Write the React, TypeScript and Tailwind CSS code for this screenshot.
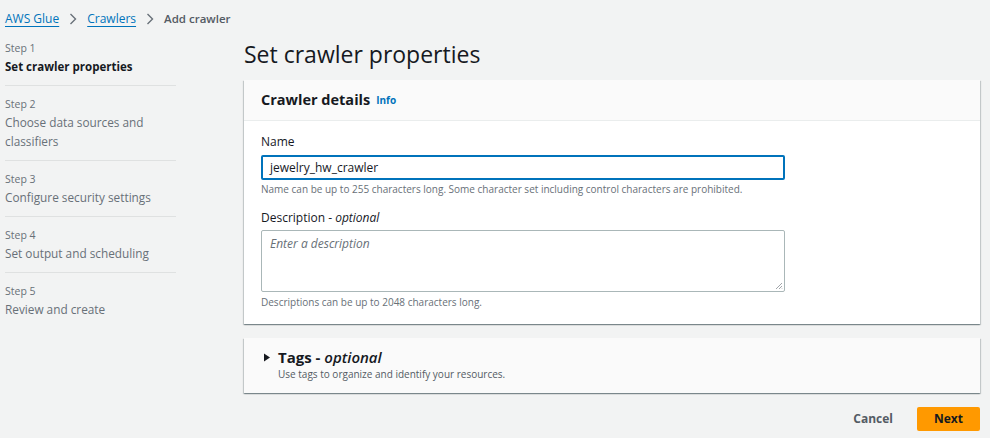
import React from 'react';

const steps = [
  { n: 1, title: 'Set crawler properties', active: true },
  { n: 2, title: 'Choose data sources and classifiers' },
  { n: 3, title: 'Configure security settings' },
  { n: 4, title: 'Set output and scheduling' },
  { n: 5, title: 'Review and create' },
];

const cardShadow =
  'shadow-[0_1px_1px_0_rgba(0,28,36,0.3),1px_1px_1px_0_rgba(0,28,36,0.15),-1px_1px_1px_0_rgba(0,28,36,0.15)]';

const Chevron = () => (
  <svg className="mx-[10px]" width="8" height="12" viewBox="0 0 8 12">
    <path d="M1.5 1 L6.5 6 L1.5 11" fill="none" stroke="#687078" strokeWidth="1.4" />
  </svg>
);

export default function App() {
  return (
    <div className="w-[990px] h-[438px] overflow-hidden bg-[#f2f3f3] text-[#16191f] font-['Open_Sans',sans-serif]">
      {/* Breadcrumbs */}
      <div className="flex items-center h-[36px] pl-[5px] pt-[1px] text-[12px] font-medium">
        <span className="text-[#0073bb] underline underline-offset-[3px] decoration-[#0073bb]">AWS Glue</span>
        <Chevron />
        <span className="text-[#0073bb] underline underline-offset-[3px] decoration-[#0073bb]">Crawlers</span>
        <Chevron />
        <span className="text-[#545b64] font-semibold text-[11.5px]">Add crawler</span>
      </div>

      <div className="flex">
        {/* Steps nav */}
        <div className="w-[171px] ml-[5px] shrink-0">
          {steps.map((s, i) => (
            <div
              key={s.n}
              className={`${i > 0 ? 'border-t border-[#dfe1e1] pt-[9px]' : 'pt-[3px]'} ${i < steps.length - 1 ? 'pb-[9px]' : ''}`}
            >
              <div className="text-[10.5px] leading-[18px] text-[#687078]">Step {s.n}</div>
              <div
                className={`leading-[19px] ${s.active ? 'text-[11.5px] font-bold text-[#16191f]' : 'text-[11.8px] text-[#687078]'}`}
              >
                {s.n === 2 ? (
                  <>Choose data sources and<br />classifiers</>
                ) : s.title}
              </div>
            </div>
          ))}
        </div>

        {/* Main */}
        <div className="ml-[68px] w-[736px]">
          <h1 className="text-[23px] leading-[36px] font-normal text-[#16191f] mb-[8px]">Set crawler properties</h1>

          {/* Crawler details card */}
          <div className={`bg-white ${cardShadow}`}>
            <div className="h-[41px] bg-[#fafafa] border-b border-[#eaeded] flex items-center px-[17px]">
              <span className="text-[14.5px] font-bold">Crawler details</span>
              <span className="ml-[6px] text-[10px] font-bold text-[#0073bb]">Info</span>
            </div>
            <div className="px-[17px] pt-[12px] pb-[14px]">
              <div className="text-[12px] leading-[18px] mb-[4px]">Name</div>
              <div className="w-[524px] h-[25px] border-2 border-[#0073bb] rounded-[2px] flex items-center px-[7px] text-[12px]">
                jewelry_hw_crawler
              </div>
              <div className="text-[10px] leading-[15px] text-[#687078] mt-[2px]">
                Name can be up to 255 characters long. Some character set including control characters are prohibited.
              </div>

              <div className="text-[12px] leading-[18px] mt-[12px] mb-[3px]">
                Description - <span className="italic">optional</span>
              </div>
              <div className="relative w-[524px] h-[62px] border border-[#aab7b8] rounded-[2px] px-[8px] pt-[4px] text-[12px] italic text-[#687078]">
                Enter a description
                <svg className="absolute right-[1px] bottom-[1px]" width="9" height="9" viewBox="0 0 9 9">
                  <path d="M8 2 L2 8 M8 5 L5 8 M8 7.5 L7.5 8" stroke="#8a8f94" strokeWidth="0.8" />
                </svg>
              </div>
              <div className="text-[10px] leading-[15px] text-[#687078] mt-[3px]">
                Descriptions can be up to 2048 characters long.
              </div>
            </div>
          </div>

          {/* Tags card */}
          <div className={`mt-[14px] h-[55px] bg-[#fafafa] flex items-start px-[19px] pt-[10px] ${cardShadow}`}>
            <svg className="mt-[5px] mr-[7px]" width="8" height="9" viewBox="0 0 8 9">
              <path d="M1 0.5 L7 4.5 L1 8.5 Z" fill="#16191f" />
            </svg>
            <div>
              <div className="text-[15px] leading-[19px] font-bold">
                Tags - <span className="italic font-semibold">optional</span>
              </div>
              <div className="text-[10px] leading-[15px] text-[#545b64]">
                Use tags to organize and identify your resources.
              </div>
            </div>
          </div>

          {/* Footer */}
          <div className="flex justify-end items-center mt-[14px]">
            <span className="text-[12px] font-bold text-[#545b64] mr-[24px]">Cancel</span>
            <div className="w-[63px] h-[24px] rounded-[2px] bg-[#ff9900] flex items-center justify-center text-[12px] font-bold text-[#16191f]">
              Next
            </div>
          </div>
        </div>
      </div>
    </div>
  );
}
